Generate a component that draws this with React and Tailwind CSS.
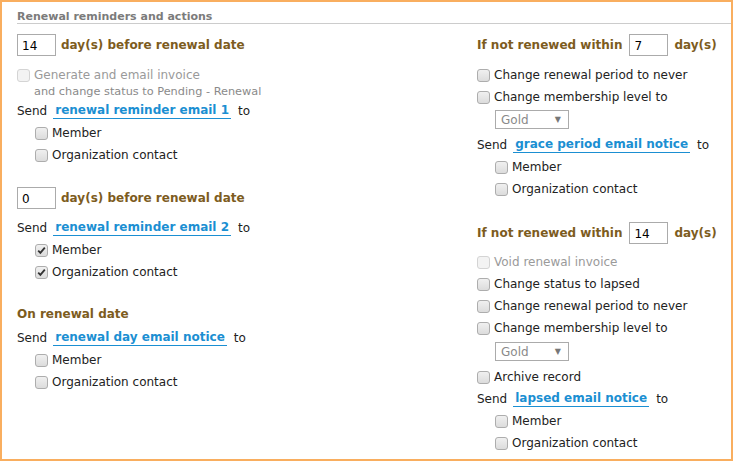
import React from 'react';

const font = { fontFamily: '"DejaVu Sans", Verdana, sans-serif' };

function Box({ checked, disabled }) {
  return (
    <span
      className={
        'relative inline-block w-[13px] h-[13px] shrink-0 rounded-[3px] border ' +
        (disabled
          ? 'border-[#d4d4d4] bg-[#f3f3f3]'
          : 'border-[#adadad] bg-gradient-to-b from-[#f0f0f0] to-[#dcdcdc]')
      }
    >
      {checked && (
        <svg viewBox="0 0 13 13" className="absolute -left-px -top-px w-[13px] h-[13px]">
          <path d="M3.2 6.6 L5.4 8.9 L9.8 3.6" fill="none" stroke="#333" strokeWidth="1.8" />
        </svg>
      )}
    </span>
  );
}

function CheckRow({ label, checked, disabled, indent }) {
  return (
    <div className={'flex items-center h-[22px] gap-[4px] ' + (indent ? 'pl-[18px]' : '')}>
      <Box checked={checked} disabled={disabled} />
      <span className={'text-[12px] ' + (disabled ? 'text-[#9a9a9a]' : 'text-[#222]')}>{label}</span>
    </div>
  );
}

function SendRow({ link, className = '' }) {
  return (
    <div className={'flex items-center h-[22px] text-[12px] text-[#222] ' + className}>
      <span>Send</span>
      <span className="ml-[6px] px-[2px] leading-[15px] font-bold text-[#1b8fd2] border-b border-[#1b8fd2]">{link}</span>
      <span className="ml-[7px]">to</span>
    </div>
  );
}

function DayInput({ value, className = '' }) {
  return (
    <div className={'flex items-center shrink-0 w-[39px] h-[22px] border border-[#ababab] bg-white pl-[4px] pt-[2px] text-[12px] leading-[14px] text-black ' + className}>
      {value}
    </div>
  );
}

function Select({ className = '' }) {
  return (
    <div className={'flex items-center justify-between w-[74px] h-[19px] ml-[18px] border border-[#ababab] pl-[5px] pr-[7px] text-[12px] text-[#8a8a8a] ' + className}>
      <span>Gold</span>
      <span className="text-[8px] text-[#777]">▼</span>
    </div>
  );
}

const heading = 'text-[12px] leading-[16px] font-bold text-[#7d5c1e]';

function Recipients() {
  return (
    <>
      <CheckRow label="Member" indent />
      <CheckRow label="Organization contact" indent />
    </>
  );
}

function GraceHeading({ days, className = '' }) {
  return (
    <div className={'flex items-center h-[22px] ' + className}>
      <span className={heading}>If not renewed within</span>
      <DayInput value={days} className="ml-[7px]" />
      <span className={'ml-[6px] ' + heading}>day(s)</span>
    </div>
  );
}

export default function App() {
  return (
    <div style={font} className="w-[733px] h-[461px] bg-white border-2 border-[#f9ae5f] overflow-hidden">
      <div className="ml-[15px] h-[22px] border-b border-[#cccccc] flex items-end">
        <span className="text-[11px] leading-[12px] font-bold text-[#7b7b7b]">Renewal reminders and actions</span>
      </div>
      <div className="flex ml-[15px]">
        {/* left column */}
        <div className="w-[460px]">
          <div className="flex items-center h-[22px] gap-[5px] mt-[10px]">
            <DayInput value="14" />
            <span className={heading}>day(s) before renewal date</span>
          </div>
          <div className="mt-[9px] flex items-center h-[20px] gap-[4px]">
            <Box disabled />
            <span className="text-[12px] text-[#9a9a9a]">Generate and email invoice</span>
          </div>
          <div className="pl-[17px] h-[13px] leading-[13px] text-[11.3px] text-[#8a8a8a]">and change status to Pending - Renewal</div>
          <SendRow link="renewal reminder email 1" className="mt-[2px]" />
          <Recipients />

          <div className="flex items-center h-[22px] gap-[5px] mt-[21px]">
            <DayInput value="0" />
            <span className={heading}>day(s) before renewal date</span>
          </div>
          <SendRow link="renewal reminder email 2" className="mt-[8px]" />
          <CheckRow label="Member" indent checked />
          <CheckRow label="Organization contact" indent checked />

          <div className={'mt-[20px] h-[22px] flex items-center ' + heading}>On renewal date</div>
          <SendRow link="renewal day email notice" className="mt-[2px]" />
          <Recipients />
        </div>

        {/* right column */}
        <div className="flex-1">
          <GraceHeading days="7" className="mt-[10px]" />
          <div className="mt-[8px]">
            <CheckRow label="Change renewal period to never" />
            <CheckRow label="Change membership level to" />
          </div>
          <Select className="mt-[2px]" />
          <SendRow link="grace period email notice" className="mt-[5px]" />
          <Recipients />

          <GraceHeading days="14" className="mt-[22px]" />
          <div className="mt-[7px]">
            <CheckRow label="Void renewal invoice" disabled />
            <CheckRow label="Change status to lapsed" />
            <CheckRow label="Change renewal period to never" />
            <CheckRow label="Change membership level to" />
          </div>
          <Select className="mt-[3px]" />
          <div className="mt-[5px]">
            <CheckRow label="Archive record" />
          </div>
          <SendRow link="lapsed email notice" />
          <Recipients />
        </div>
      </div>
    </div>
  );
}
